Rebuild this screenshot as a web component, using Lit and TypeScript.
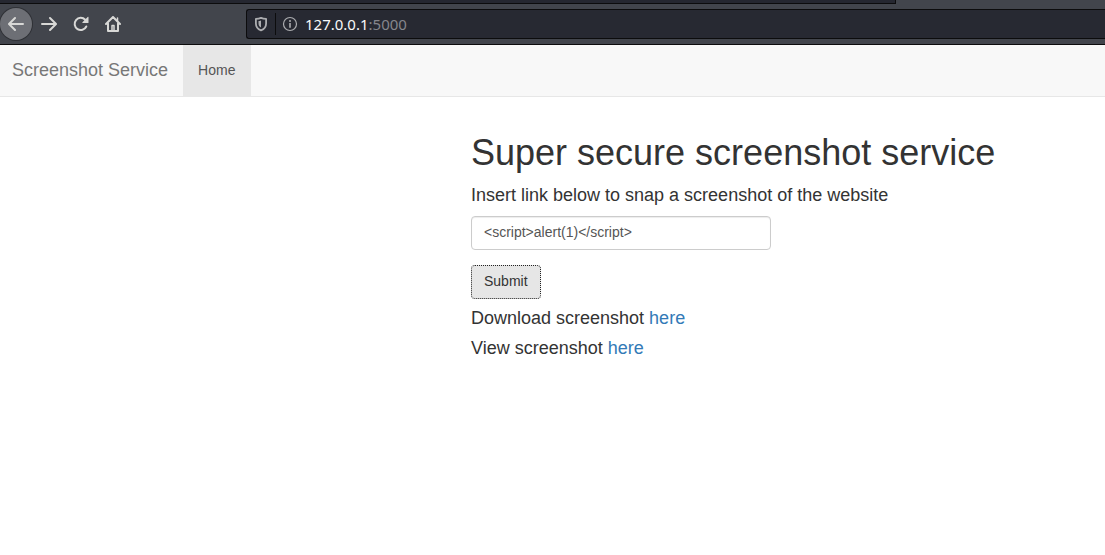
import { LitElement, html, css } from "lit";
import { customElement, state } from "lit/decorators.js";

@customElement("browser-toolbar")
export class BrowserToolbar extends LitElement {
  static styles = css`
    :host {
      display: block;
      background: #42454c;
      border-bottom: 1px solid #0c0c0d;
    }
    .tabs {
      display: grid;
      grid-template-columns: 896fr 209fr;
    }
    .strip {
      box-sizing: border-box;
      height: 4px;
      background: #252730;
      border: solid #0c0c0d;
      border-width: 0 1px 1px 0;
    }
    .bar {
      display: flex;
      align-items: center;
      height: 40px;
    }
    .tool {
      display: flex;
      align-items: center;
      justify-content: center;
      width: 32px;
      height: 32px;
      padding: 0;
      border: 0;
      border-radius: 50%;
      background: none;
      color: #d8d8d6;
    }
    .tool.back {
      margin-right: 1px;
      background: #6d6f75;
      box-shadow: 0 0 0 1px #2f3136;
    }
    .tool svg,
    .address svg {
      display: block;
      width: 16px;
      height: 16px;
    }
    .address {
      box-sizing: border-box;
      display: flex;
      align-items: center;
      flex: 1;
      height: 30px;
      margin-left: 117px;
      padding-left: 6px;
      background: #272932;
      border: solid #0c0c0d;
      border-width: 1px 0 1px 1px;
      border-radius: 3px 0 0 3px;
      color: #acadb0;
    }
    .divider {
      width: 1px;
      height: 22px;
      margin: 0 6px;
      background: #0c0c0d;
    }
    .url {
      margin-left: 7px;
      font: 15px/20px "Noto Sans", sans-serif;
      color: #f9f9fa;
    }
    .port {
      color: #85868c;
    }
  `;

  render() {
    return html`
      <div class="tabs"><div class="strip"></div></div>
      <div class="bar">
        <button class="tool back" aria-label="Back">
          <svg viewBox="0 0 16 16" fill="none" stroke="currentColor" stroke-width="2" stroke-linecap="round" stroke-linejoin="round">
            <path d="M15 8H1.500M7 2 1 8l6 6" />
          </svg>
        </button>
        <button class="tool" aria-label="Forward">
          <svg viewBox="0 0 16 16" fill="none" stroke="currentColor" stroke-width="2" stroke-linecap="round" stroke-linejoin="round">
            <path d="M1 8h13.500M9 2l6 6-6 6" />
          </svg>
        </button>
        <button class="tool" aria-label="Reload">
          <svg viewBox="0 0 16 16">
            <path d="M13.300 10.500A6.100 6.100 0 1 1 12.200 3.800" fill="none" stroke="currentColor" stroke-width="2" stroke-linecap="round" />
            <path d="M15.500 1.300v5.200a.5.5 0 0 1-.5.500H9.800a.5.5 0 0 1-.35-.85L14.650.950a.5.5 0 0 1 .85.350z" fill="currentColor" />
          </svg>
        </button>
        <button class="tool" aria-label="Home">
          <svg viewBox="0 0 16 16" fill="none" stroke="currentColor" stroke-width="2" stroke-linecap="round" stroke-linejoin="round">
            <path d="M1 8l7-7 7 7M3 7.500V15h10V7.500" />
            <path d="M7 15V9.500h2V15" stroke-width="1.500" />
            <path d="M12.500 2v3" stroke-width="1.500" />
          </svg>
        </button>
        <div class="address">
          <svg viewBox="0 0 16 16">
            <path d="M8 1.800c1.700.7 3.500 1 5.100 1.100v4.600c0 3-1.900 5.600-5.100 6.900-3.200-1.300-5.100-3.900-5.100-6.900V2.900C4.500 2.800 6.300 2.500 8 1.800z" fill="none" stroke="currentColor" stroke-width="1.800" stroke-linejoin="round" />
            <path d="M8 4.400v7.200c-1.600-.9-2.500-2.300-2.500-4.100V5C6.400 4.900 7.200 4.700 8 4.400z" fill="currentColor" />
          </svg>
          <span class="divider"></span>
          <svg viewBox="0 0 16 16">
            <circle cx="8" cy="8" r="6.500" fill="none" stroke="currentColor" stroke-width="1.200" />
            <path d="M7.200 7h1.600v4.800H7.200z" fill="currentColor" />
            <circle cx="8" cy="4.900" r="1" fill="currentColor" />
          </svg>
          <span class="url">127.0.0.1<span class="port">:5000</span></span>
        </div>
      </div>
    `;
  }
}

@customElement("app-root")
export class AppRoot extends LitElement {
  static styles = css`
    :host {
      display: block;
      min-height: 100vh;
      background: #fff;
      color: #333;
      font: 14px/20px "Liberation Sans", Arial, sans-serif;
    }
    a {
      color: #337ab7;
      text-decoration: none;
    }
    .navbar {
      display: flex;
      background: #f8f8f8;
      border-bottom: 1px solid #e7e7e7;
    }
    .brand {
      padding: 15px 15px 16px 12px;
      font-size: 18px;
      color: #777;
    }
    .item {
      padding: 15px 16px 16px 15px;
      background: #e7e7e7;
      color: #555;
    }
    .page {
      display: grid;
      grid-template-columns: 471fr 634fr;
      padding-top: 36px;
    }
    .content {
      grid-column: 2;
    }
    h1 {
      margin: 0 0 12px;
      font-size: 36px;
      line-height: 40px;
      font-weight: 400;
    }
    .line {
      display: block;
      margin: 0 0 10px;
      font-size: 18px;
      line-height: 20px;
    }
    form {
      margin-bottom: 9px;
    }
    form .line {
      margin-bottom: 11px;
    }
    .field {
      box-sizing: border-box;
      display: block;
      width: 300px;
      height: 34px;
      margin-bottom: 15px;
      padding: 5px 12px 7px;
      border: 1px solid #ccc;
      border-radius: 4px;
      box-shadow: inset 0 1px 1px rgba(0, 0, 0, 0.075);
      background: #fff;
      color: #555;
      font: inherit;
    }
    .submit {
      display: block;
      height: 34px;
      padding: 5px 12px 7px;
      border: 1px dotted #222;
      border-radius: 4px;
      background: #e6e6e6;
      color: #333;
      font: inherit;
    }
  `;

  @state() private link = "<script>alert(1)</" + "script>";

  render() {
    return html`
      <browser-toolbar></browser-toolbar>
      <nav class="navbar">
        <a class="brand" href="#">Screenshot Service</a>
        <a class="item" href="#">Home</a>
      </nav>
      <main class="page">
        <div class="content">
          <h1>Super secure screenshot service</h1>
          <form @submit=${(e: Event) => e.preventDefault()}>
            <label class="line" for="link">Insert link below to snap a screenshot of the website</label>
            <input
              class="field"
              id="link"
              type="text"
              .value=${this.link}
              @input=${(e: Event) => (this.link = (e.target as HTMLInputElement).value)}
            />
            <button class="submit" type="submit">Submit</button>
          </form>
          <p class="line">Download screenshot <a href="#">here</a></p>
          <p class="line">View screenshot <a href="#">here</a></p>
        </div>
      </main>
    `;
  }
}
